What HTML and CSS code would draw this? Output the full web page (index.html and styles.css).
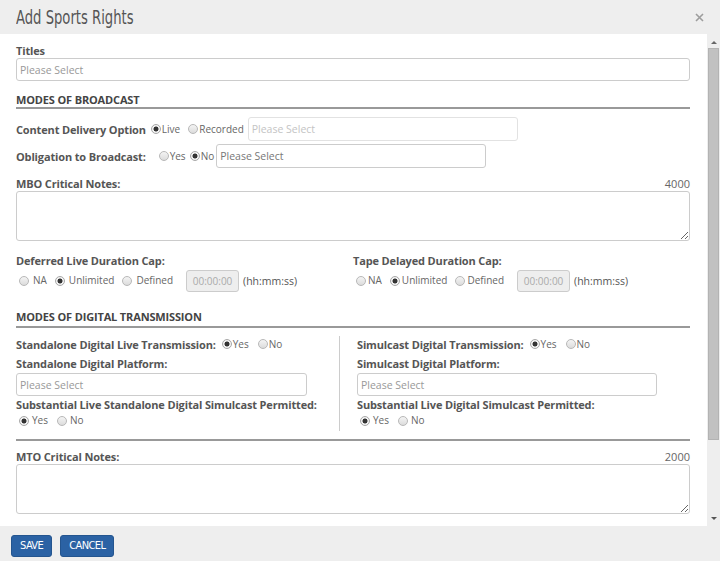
FILE: index.html
```html
<!DOCTYPE html>
<html lang="en">
<head>
<meta charset="utf-8">
<title>Add Sports Rights</title>
<link rel="stylesheet" href="styles.css">
</head>
<body>
<div class="modal">
  <div class="modal-header">
    <h1 class="modal-title">Add Sports Rights</h1>
    <button class="close" type="button" aria-label="Close"><svg width="9" height="9" viewBox="0 0 9 9"><path d="M1 1L8 8M8 1L1 8" stroke="#9d9d9d" stroke-width="1.6"/></svg></button>
  </div>
  <div class="modal-main">
    <div class="modal-body">
      <label class="field-label">Titles</label>
      <input class="form-input titles" placeholder="Please Select">

      <h2 class="section-title broadcast">MODES OF BROADCAST</h2>

      <div class="inline-row delivery">
        <span class="field-label">Content Delivery Option</span>
        <label class="radio"><input type="radio" name="cd" checked>Live</label>
        <label class="radio"><input type="radio" name="cd">Recorded</label>
        <input class="form-input select-w muted" placeholder="Please Select">
      </div>
      <div class="inline-row obligation">
        <span class="field-label">Obligation to Broadcast:</span>
        <label class="radio"><input type="radio" name="ob">Yes</label>
        <label class="radio"><input type="radio" name="ob" checked>No</label>
        <input class="form-input select-w dark" placeholder="Please Select">
      </div>

      <div class="notes-head mbo">
        <span class="field-label">MBO Critical Notes:</span>
        <span class="counter">4000</span>
      </div>
      <textarea class="notes"></textarea>

      <div class="duration-grid">
        <div class="duration left">
          <div class="field-label">Deferred Live Duration Cap:</div>
          <div class="radio-line spaced">
            <label class="radio"><input type="radio" name="dl">NA</label>
            <label class="radio"><input type="radio" name="dl" checked>Unlimited</label>
            <label class="radio"><input type="radio" name="dl">Defined</label>
            <input class="time-input" value="00:00:00" disabled>
            <span class="hint">(hh:mm:ss)</span>
          </div>
        </div>
        <div class="duration right">
          <div class="field-label">Tape Delayed Duration Cap:</div>
          <div class="radio-line tight">
            <label class="radio"><input type="radio" name="td">NA</label>
            <label class="radio"><input type="radio" name="td" checked>Unlimited</label>
            <label class="radio"><input type="radio" name="td">Defined</label>
            <input class="time-input" value="00:00:00" disabled>
            <span class="hint">(hh:mm:ss)</span>
          </div>
        </div>
      </div>

      <h2 class="section-title digital">MODES OF DIGITAL TRANSMISSION</h2>

      <div class="digital-grid">
        <div class="digital-col left">
          <div class="inline-row first-line">
            <span class="field-label">Standalone Digital Live Transmission:</span>
            <label class="radio"><input type="radio" name="sdl" checked>Yes</label>
            <label class="radio"><input type="radio" name="sdl">No</label>
          </div>
          <div class="field-label">Standalone Digital Platform:</div>
          <input class="form-input platform-left" placeholder="Please Select">
          <div class="field-label after-input">Substantial Live Standalone Digital Simulcast Permitted:</div>
          <div class="radio-line yesno">
            <label class="radio"><input type="radio" name="sls" checked>Yes</label>
            <label class="radio"><input type="radio" name="sls">No</label>
          </div>
        </div>
        <div class="digital-col right">
          <div class="inline-row first-line">
            <span class="field-label">Simulcast Digital Transmission:</span>
            <label class="radio"><input type="radio" name="sdt" checked>Yes</label>
            <label class="radio"><input type="radio" name="sdt">No</label>
          </div>
          <div class="field-label">Simulcast Digital Platform:</div>
          <input class="form-input platform-right" placeholder="Please Select">
          <div class="field-label after-input">Substantial Live Digital Simulcast Permitted:</div>
          <div class="radio-line yesno">
            <label class="radio"><input type="radio" name="sld" checked>Yes</label>
            <label class="radio"><input type="radio" name="sld">No</label>
          </div>
        </div>
      </div>

      <div class="divider"></div>

      <div class="notes-head mto">
        <span class="field-label">MTO Critical Notes:</span>
        <span class="counter">2000</span>
      </div>
      <textarea class="notes"></textarea>
    </div>
    <div class="scrollbar" aria-hidden="true">
      <span class="arrow up"></span>
      <span class="thumb"></span>
      <span class="arrow down"></span>
    </div>
  </div>
  <div class="modal-footer">
    <button class="btn" type="button">SAVE</button>
    <button class="btn" type="button">CANCEL</button>
  </div>
</div>
</body>
</html>
```

FILE: styles.css
```css
* { box-sizing: border-box; }
html, body { margin: 0; padding: 0; }
body {
  width: 720px;
  height: 561px;
  overflow: hidden;
  background: #fff;
  font-family: "Open Sans", "Noto Sans", sans-serif;
  color: #555;
}
.modal { width: 720px; height: 561px; display: flex; flex-direction: column; }

.modal-header {
  height: 34px;
  background: #eee;
  display: flex;
  align-items: center;
  justify-content: space-between;
  padding: 0 16px 0 16px;
}
.modal-title {
  margin: 0;
  font-family: "DejaVu Sans Condensed", "DejaVu Sans", sans-serif;
  font-stretch: condensed;
  font-weight: normal;
  font-size: 19px;
  color: #555;
  line-height: 34px;
  white-space: nowrap;
  transform: scaleX(0.77);
  transform-origin: left center;
}
.close {
  border: 0; background: none; padding: 0; margin: 0;
  width: 9px; height: 9px; display: flex;
}

.modal-main { height: 492px; display: flex; }
.modal-body {
  width: 707px;
  height: 492px;
  overflow: hidden;
  padding: 9px 17px 0 16px;
  background: #fff;
}

.field-label {
  display: block;
  font-size: 11px;
  line-height: 15px;
  font-weight: 700;
  letter-spacing: -0.15px;
  color: #555;
  white-space: nowrap;
}

.form-input {
  display: block;
  height: 23px;
  border: 1px solid #ccc;
  border-radius: 3px;
  padding: 0 3px;
  font-family: "Open Sans", sans-serif;
  font-size: 10.5px;
  color: #666;
  background: #fff;
  outline: none;
}
.form-input::placeholder { color: #999; }
.titles { width: 674px; }
.select-w { width: 270px; height: 24px; }
.muted { border-color: #e2e2e2; }
.muted::placeholder { color: #c4c4c4; }
.dark::placeholder { color: #777; }

.section-title {
  margin: 0;
  font-size: 11px;
  font-weight: 700;
  letter-spacing: -0.15px;
  line-height: 14px;
  color: #444;
  border-bottom: 2px solid #999;
}
.section-title.broadcast { margin-top: 12px; }
.section-title.digital { margin-top: 18px; padding-bottom: 2px; }

.inline-row { display: flex; align-items: center; }
.inline-row.delivery { margin-top: 8px; height: 24px; }
.inline-row.obligation { margin-top: 3px; height: 24px; }

.radio {
  display: inline-flex;
  align-items: center;
  font-size: 10px;
  line-height: 15px;
  color: #666;
  margin-right: 8px;
  white-space: nowrap;
}
.radio input {
  -webkit-appearance: none;
  appearance: none;
  width: 10px;
  height: 10px;
  margin: 0 1px 0 0;
  border: 1px solid #b8b8b8;
  border-radius: 50%;
  background: linear-gradient(#f4f4f4, #dcdcdc);
  flex: none;
}
.radio input:checked {
  background: radial-gradient(circle, #333 0 2.2px, #f2f2f2 2.8px);
  border-color: #a8a8a8;
}

.delivery .field-label { margin-right: 5px; }
.delivery .radio { margin-right: 8px; }
.delivery .radio:last-of-type { margin-right: 4px; }
.obligation .field-label { margin-right: 13px; }
.obligation .radio { margin-right: 4px; }
.obligation .radio:last-of-type { margin-right: 2px; }

.notes-head { display: flex; justify-content: space-between; align-items: center; height: 15px; }
.notes-head.mbo { margin-top: 8px; }
.notes-head.mto { margin-top: 8px; }
.counter { font-size: 11px; line-height: 15px; color: #666; }
.notes {
  display: block;
  width: 674px;
  height: 50px;
  border: 1px solid #ccc;
  border-radius: 3px;
  margin: 0;
  font-family: "Open Sans", sans-serif;
  outline: none;
}

.duration-grid {
  margin-top: 12px;
  display: grid;
  grid-template-columns: 337px 337px;
}
.radio-line { display: flex; align-items: center; height: 23px; margin-top: 1px; }
.radio-line.spaced { padding-left: 3px; }
.radio-line.spaced .radio input { margin-right: 4px; }
.radio-line.spaced .radio { margin-right: 8px; }
.radio-line.tight { padding-left: 3px; }
.radio-line.tight .radio input { margin-right: 2px; }
.radio-line.tight .radio { margin-right: 8px; }
.radio-line .radio:nth-of-type(3) { margin-right: 13px; }
.time-input {
  width: 53px;
  height: 22px;
  border: 1px solid #ccc;
  border-radius: 3px;
  background: #eee;
  color: #aaa;
  font-family: "Open Sans", sans-serif;
  font-size: 10px;
  text-align: center;
  padding: 0;
  margin-right: 4px;
}
.hint { font-size: 10.5px; color: #555; }

.digital-grid {
  margin-top: 8px;
  display: grid;
  grid-template-columns: 323px 351px;
}
.digital-col { padding-bottom: 3px; }
.digital-col.right { border-left: 1px solid #ccc; padding-left: 17px; }
.first-line { height: 16px; margin-bottom: 4px; }
.first-line .field-label { margin-right: 6px; }
.first-line .radio { margin-right: 9px; }
.platform-left { width: 291px; margin-top: 2px; }
.platform-right { width: 300px; margin-top: 2px; }
.after-input { margin-top: 1px; }
.radio-line.yesno { height: 15px; margin-top: 1px; padding-left: 3px; }
.radio-line.yesno .radio input { margin-right: 3px; }
.radio-line.yesno .radio { margin-right: 9px; }

.divider { margin-top: 8px; height: 2px; background: #999; }

.scrollbar {
  width: 13px;
  height: 492px;
  background: #eee;
  display: flex;
  flex-direction: column;
  align-items: center;
}
.arrow { width: 0; height: 0; display: block; }
.arrow.up {
  margin-top: 7px;
  border-left: 3px solid transparent;
  border-right: 3px solid transparent;
  border-bottom: 3px solid #666;
}
.thumb {
  display: block;
  margin-top: 4px;
  width: 11px;
  height: 392px;
  background: #c1c1c1;
  border: 1px solid #b3b3b3;
}
.arrow.down {
  margin-top: auto;
  margin-bottom: 6px;
  border-left: 3px solid transparent;
  border-right: 3px solid transparent;
  border-top: 3px solid #555;
}

.modal-footer {
  height: 35px;
  background: #eee;
  padding: 9px 0 0 11px;
  display: flex;
  align-items: flex-start;
  gap: 8px;
}
.btn {
  height: 22px;
  padding: 0 8px 0 8px;
  border: 1px solid #24558f;
  border-radius: 3px;
  background: #2b62a4;
  color: #fff;
  font-family: "DejaVu Sans Condensed", "DejaVu Sans", sans-serif;
  font-stretch: condensed;
  font-size: 11px;
  letter-spacing: -0.6px;
  line-height: 20px;
}
```
